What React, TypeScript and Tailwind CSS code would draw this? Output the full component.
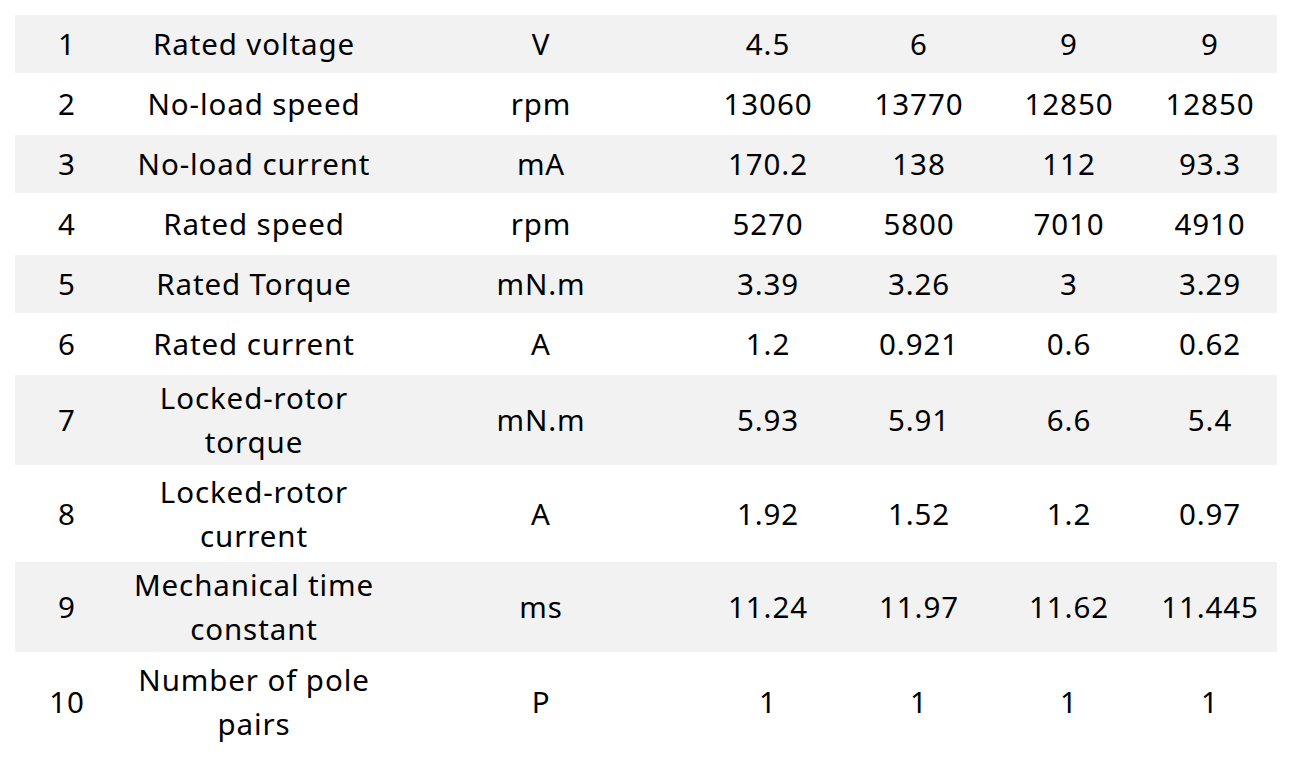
const rows: { no: string; name: string[]; unit: string; vals: string[]; h: string }[] = [
  { no: '1', name: ['Rated voltage'], unit: 'V', vals: ['4.5', '6', '9', '9'], h: 'h-[58px]' },
  { no: '2', name: ['No-load speed'], unit: 'rpm', vals: ['13060', '13770', '12850', '12850'], h: 'h-[62px]' },
  { no: '3', name: ['No-load current'], unit: 'mA', vals: ['170.2', '138', '112', '93.3'], h: 'h-[58px]' },
  { no: '4', name: ['Rated speed'], unit: 'rpm', vals: ['5270', '5800', '7010', '4910'], h: 'h-[62px]' },
  { no: '5', name: ['Rated Torque'], unit: 'mN.m', vals: ['3.39', '3.26', '3', '3.29'], h: 'h-[58px]' },
  { no: '6', name: ['Rated current'], unit: 'A', vals: ['1.2', '0.921', '0.6', '0.62'], h: 'h-[62px]' },
  { no: '7', name: ['Locked-rotor', 'torque'], unit: 'mN.m', vals: ['5.93', '5.91', '6.6', '5.4'], h: 'h-[90px]' },
  { no: '8', name: ['Locked-rotor', 'current'], unit: 'A', vals: ['1.92', '1.52', '1.2', '0.97'], h: 'h-[97px]' },
  { no: '9', name: ['Mechanical time', 'constant'], unit: 'ms', vals: ['11.24', '11.97', '11.62', '11.445'], h: 'h-[90px]' },
  { no: '10', name: ['Number of pole', 'pairs'], unit: 'P', vals: ['1', '1', '1', '1'], h: 'h-[100px]' },
];

export default function App() {
  return (
    <div className="h-[758px] w-[1292px] bg-white pl-[15px] pt-[15px] font-['Noto_Sans',sans-serif] text-[29.5px] leading-[44px] tracking-[0.9px] text-black">
      <div className="w-[1262px]">
        {rows.map((r, i) => (
          <div
            key={r.no}
            className={`grid grid-cols-[104px_270px_304px_150px_152px_148px_134px] items-center text-center ${r.h} ${i % 2 === 0 ? 'bg-[#f2f2f2]' : 'bg-white'}`}
          >
            <div>{r.no}</div>
            <div className="whitespace-nowrap">
              {r.name.map((n) => (
                <div key={n}>{n}</div>
              ))}
            </div>
            <div>{r.unit}</div>
            {r.vals.map((v, j) => (
              <div key={j}>{v}</div>
            ))}
          </div>
        ))}
      </div>
    </div>
  );
}
